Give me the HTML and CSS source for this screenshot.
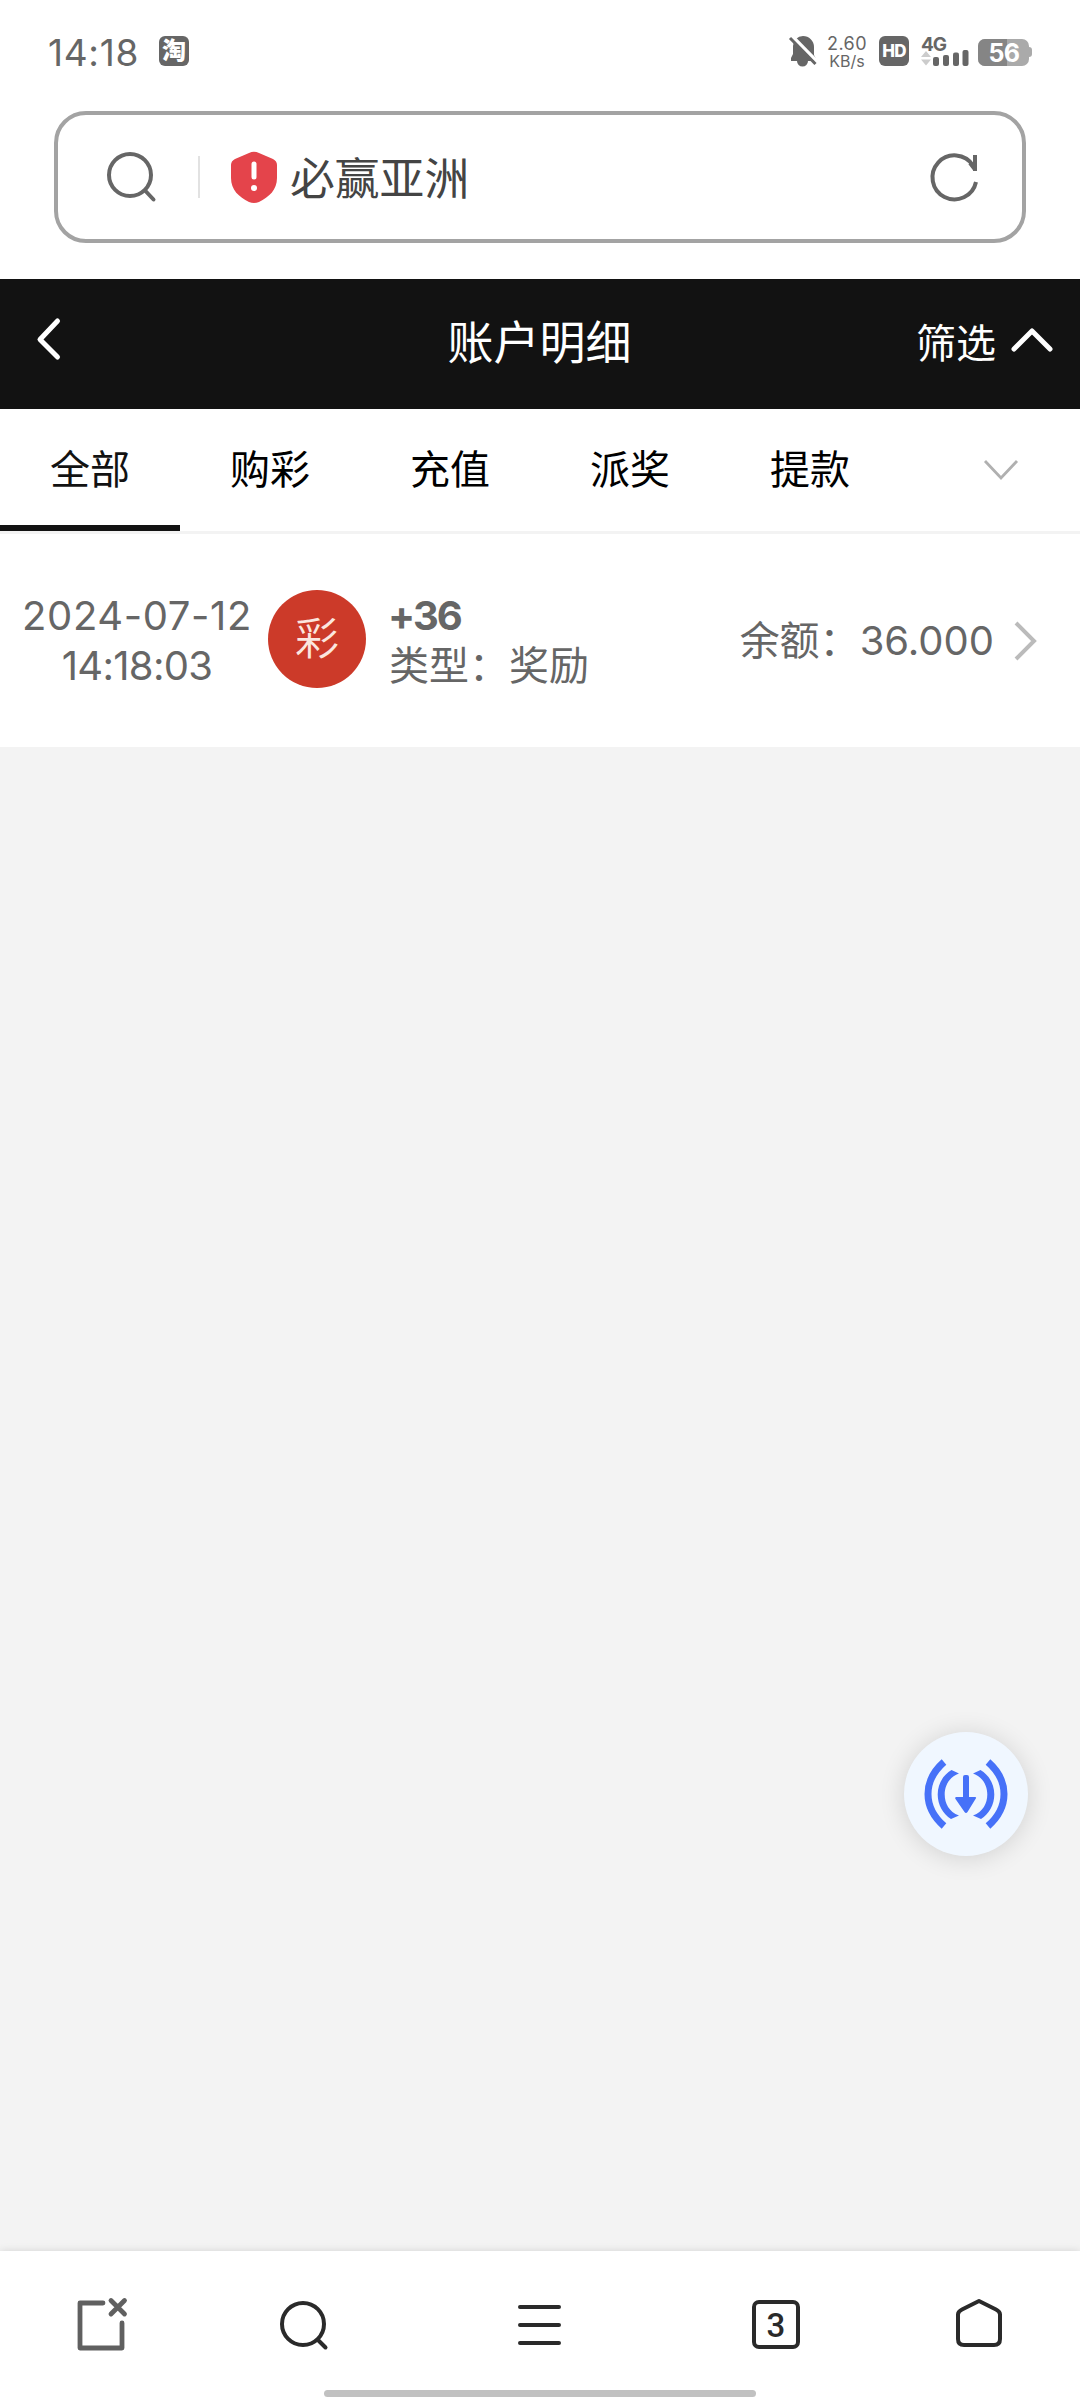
FILE: index.html
```html
<!DOCTYPE html>
<html lang="zh-CN">
<head>
<meta charset="utf-8">
<title>账户明细</title>
<link rel="stylesheet" href="styles.css">
</head>
<body>
<div class="screen">
  <div class="status">
    <span class="clock">14:18</span>
    <span class="app-badge">淘</span>
    <div class="status-right">
      <svg class="bell" width="28" height="30" viewBox="0 0 28 30">
        <path fill="#666" d="M14 0a11 11 0 0 1 11 11v8l2 4v2h-8a5.500 5.500 0 0 1-11 0H2v-3l2-4v-8A10 10 0 0 1 14 0z"/>
        <path d="M3 0L28 25.500" stroke="#fff" stroke-width="3.500"/>
        <path d="M1 2L26.500 28" stroke="#666" stroke-width="3"/>
      </svg>
      <div class="speed"><span class="rate">2.60</span><span class="unit">KB/s</span></div>
      <span class="hd">HD</span>
      <svg class="signal" width="48" height="30" viewBox="0 0 48 30">
        <text x="0" y="14.500" class="net">4G</text>
        <path fill="#ccc" d="M0 21l5-6 5 6zM0 23.500h10l-5 6z"/>
        <g fill="#666"><rect x="12" y="21" width="6" height="9" rx="2"/><rect x="22" y="19" width="6" height="11" rx="2"/><rect x="32" y="16.500" width="6" height="13.500" rx="2"/><rect x="41.500" y="14" width="6" height="16" rx="2"/></g>
      </svg>
      <svg class="battery" width="55" height="27" viewBox="0 0 55 27">
        <rect width="51" height="27" rx="7" fill="#aaa"/>
        <path fill="#aaa" d="M50 8h1a3 3 0 0 1 3 3v4a3 3 0 0 1-3 3h-1z"/>
        <path fill="#858585" d="M7 0h22v27H7a7 7 0 0 1-7-7V7a7 7 0 0 1 7-7z"/>
        <text x="26" y="22.500" class="level">56</text>
      </svg>
    </div>
  </div>

  <div class="address">
    <svg class="find" width="50" height="50" viewBox="0 0 50 50" fill="none" stroke="#666" stroke-width="4"><circle cx="24" cy="23" r="21"/><path d="M39.500 39l8 8.500" stroke-linecap="round"/></svg>
    <i class="divider"></i>
    <svg class="shield" width="46" height="52" viewBox="0 0 46 52"><path fill="#e4444b" d="M18 2q5-2.500 10 0l14 6q4 2 4 6v13c0 12-8 19-18 24q-5 2-10 0C8 46 0 39 0 27V14q0-4 4-6z"/><path d="M23 13v13" stroke="#fff" stroke-width="5" stroke-linecap="round"/><circle cx="23" cy="37" r="3" fill="#fff"/></svg>
    <span class="site">必赢亚洲</span>
    <svg class="reload" width="48" height="50" viewBox="0 0 48 50" fill="none" stroke="#666" stroke-width="4"><path d="M46 30A22 22 0 1 1 43 13.500"/><path d="M45 3v16M45 17.500L40 11"/></svg>
  </div>

  <header class="titlebar">
    <svg width="24" height="42" viewBox="0 0 24 42" fill="none" stroke="#fff" stroke-width="5" stroke-linecap="round" stroke-linejoin="round"><path d="M20.500 3L3 21.500 20.500 39"/></svg>
    <h1>账户明细</h1>
    <div class="filter"><span>筛选</span><svg width="42" height="26" viewBox="0 0 42 26" fill="none" stroke="#fff" stroke-width="5" stroke-linecap="round" stroke-linejoin="round"><path d="M3 22L21 4l18 18"/></svg></div>
  </header>

  <nav class="tabs">
    <span class="tab active">全部</span><span class="tab">购彩</span><span class="tab">充值</span><span class="tab">派奖</span><span class="tab">提款</span>
    <span class="more"><svg width="36" height="22" viewBox="0 0 36 22" fill="none" stroke="#b0b0b0" stroke-width="2.800"><path d="M2 2l16 17L34 2"/></svg></span>
  </nav>

  <main class="content">
    <div class="record">
      <div class="when"><span class="date">2024-07-12</span><span class="time">14:18:03</span></div>
      <div class="avatar">彩</div>
      <div class="detail"><b>+36</b><span>类型：奖励</span></div>
      <div class="balance">余额：<span>36.000</span></div>
      <svg class="go" width="24" height="40" viewBox="0 0 24 40" fill="none" stroke="#bbb" stroke-width="4"><path d="M2 2l18 18L2 38"/></svg>
    </div>
  </main>

  <footer class="toolbar">
    <svg width="52" height="56" viewBox="0 0 52 56" fill="none" stroke="#606060" stroke-width="4.800" stroke-linecap="round" stroke-linejoin="round"><path d="M26 6H3v45h42V26M34 3.500L47.500 17M47.500 3.500L34 17"/></svg>
    <svg class="search" width="52" height="56" viewBox="0 0 52 56" fill="none" stroke="#2a2a2a" stroke-width="4" stroke-linecap="round"><circle cx="25" cy="27" r="21"/><path d="M40 43l7.500 7.500"/></svg>
    <svg class="menu" width="52" height="56" viewBox="0 0 52 56" fill="none" stroke="#2a2a2a" stroke-width="4" stroke-linecap="round"><path d="M8 10h39M8 28h39M8 46h39"/></svg>
    <span class="windows">3</span>
    <svg class="home" width="52" height="56" viewBox="0 0 52 56" fill="none" stroke="#2a2a2a" stroke-width="4" stroke-linejoin="round"><path d="M26 4l17 8.500q4 2 4 5V42q0 6-6 6H11q-6 0-6-6V17.500q0-3 4-5z"/></svg>
  </footer>
  <i class="home-bar"></i>

  <div class="float">
    <svg width="84" height="70" viewBox="0 0 84 70" fill="none" stroke="#4671f8" stroke-width="7"><path d="M20 3Q4 17 4 35t16 32M64 3q16 14 16 32T64 67"/><path fill="#4671f8" stroke="none" d="M27.500 11l7.500 3.500C25 18 20.700 27 20.700 35.500S25 53 35 56.500L27 60C19 55 13.700 46 13.700 35.500S19 16 27.500 11zM56.500 11L49 14.500c10 3.500 14.300 12.500 14.300 21S59 53 49 56.500l8 3.500c8-5 13.300-14 13.300-24.500S65 16 56.500 11zM39 18q0-2 2-2h2q2 0 2 2v20h6q2 0 .500 2L43.500 53q-1.500 2-3 0L31.500 40q-1-2 1-2H39z"/></svg>
  </div>
</div>
</body>
</html>
```
FILE: styles.css
```css
* { box-sizing: border-box; }
body { margin: 0; background: #fff; font-family: Inter, "Noto Sans CJK SC", sans-serif; }
svg { display: block; flex: none; overflow: visible; }
span { white-space: nowrap; }
.screen { position: relative; width: 1080px; height: 2400px; display: flex; flex-direction: column; overflow: hidden; }

.status { height: 111px; padding: 36px 48px 0; display: flex; align-items: flex-start; color: #666; }
.clock { width: 111px; font-size: 37px; line-height: 34px; letter-spacing: 0.7px; }
.app-badge { width: 30px; height: 30px; border-radius: 6px; background: #666; color: #fff; font-size: 24px; line-height: 29px; font-weight: 900; text-align: center; }
.status-right { margin-left: auto; display: flex; align-items: flex-start; }
.speed { width: 40px; margin-left: 10px; display: flex; flex-direction: column; align-items: center; }
.rate { font-size: 18px; line-height: 16px; letter-spacing: 0.4px; }
.unit { font-size: 16px; line-height: 18px; }
.hd { width: 30px; height: 30px; margin-left: 12px; border-radius: 6px; background: #666; color: #fff; font-size: 17px; line-height: 30px; font-weight: 800; letter-spacing: -0.8px; text-align: center; }
.signal { margin-left: 12px; }
.net { font-size: 19px; font-weight: 700; fill: #666; letter-spacing: -1px; }
.battery { margin: 3px 0 0 9px; margin-right: -1px; }
.level { font-size: 25px; font-weight: 700; fill: #fff; text-anchor: middle; letter-spacing: -0.5px; }

.address { width: 972px; height: 132px; margin-left: 54px; border: 4px solid #a3a3a3; border-radius: 32px; padding: 0 44px 0 48px; display: flex; align-items: center; }
.divider { width: 2px; height: 42px; margin: 0 31px 0 42px; background: #e2e2e2; }
.site { margin: 4px 0 0 13px; font-size: 44.8px; line-height: 60px; color: #444; }
.reload { margin-left: auto; }

.titlebar { height: 130px; margin-top: 36px; padding: 0 27px 0 37px; background: #121212; color: #fff; display: grid; grid-template-columns: 1fr auto 1fr; align-items: center; }
.titlebar > svg { margin-top: -10px; }
.titlebar h1 { margin: -4px 11px 0 0; font-size: 46px; line-height: 60px; font-weight: 400; }
.filter { display: flex; justify-content: flex-end; align-items: center; gap: 15px; font-size: 40px; line-height: 56px; }
.filter svg { margin-top: -8px; }

.tabs { height: 125px; border-bottom: 3px solid #f3f3f3; display: flex; }
.tab { width: 180px; padding-top: 31px; font-size: 40px; line-height: 60px; text-align: center; color: #000; }
.tab.active { color: #121212; border-bottom: 6px solid #121212; }
.more { flex: 1; display: flex; justify-content: center; padding: 50px 0 0 21px; }

.content { flex: 1; background: #f3f3f3; }
.record { height: 213px; padding: 0 42px 0 22px; background: #fff; color: #666; display: flex; align-items: center; font-size: 40px; line-height: 50px; }
.when { width: 230px; display: flex; flex-direction: column; align-items: center; }
.date { letter-spacing: 0.6px; }
.time { letter-spacing: -0.7px; }
.avatar { width: 98px; height: 98px; margin: -3px 23px 0 16px; border-radius: 50%; background: #cc3a29; color: #fbe6df; font-size: 44px; line-height: 99px; font-weight: 350; text-align: center; }
.detail { display: flex; flex-direction: column; }
.detail b { margin-left: -1px; letter-spacing: -2px; }
.balance { margin-left: auto; white-space: nowrap; }
.go { margin-left: 20px; }

.toolbar { position: relative; height: 149px; padding: 46px 0 0 77px; background: #fff; box-shadow: 0 0 8px rgba(0,0,0,.13); display: flex; align-items: flex-start; }
.search { margin-left: 149px; }
.menu { margin-left: 182px; }
.windows { width: 48px; height: 49px; margin: 3px 0 0 188px; border: 4px solid #2a2a2a; border-radius: 7px; color: #2a2a2a; font-family: Roboto, sans-serif; font-size: 33px; line-height: 43px; font-weight: 500; text-align: center; }
.home { margin-left: 153px; }
.home-bar { position: absolute; left: 324px; bottom: 3px; width: 432px; height: 7px; border-radius: 4px; background: #c1c1c1; }
.float { position: absolute; left: 904px; top: 1732px; width: 124px; height: 124px; border-radius: 50%; background: #f0f7ff; box-shadow: 0 2px 26px rgba(0,0,0,.14); display: flex; align-items: center; justify-content: center; }
```
